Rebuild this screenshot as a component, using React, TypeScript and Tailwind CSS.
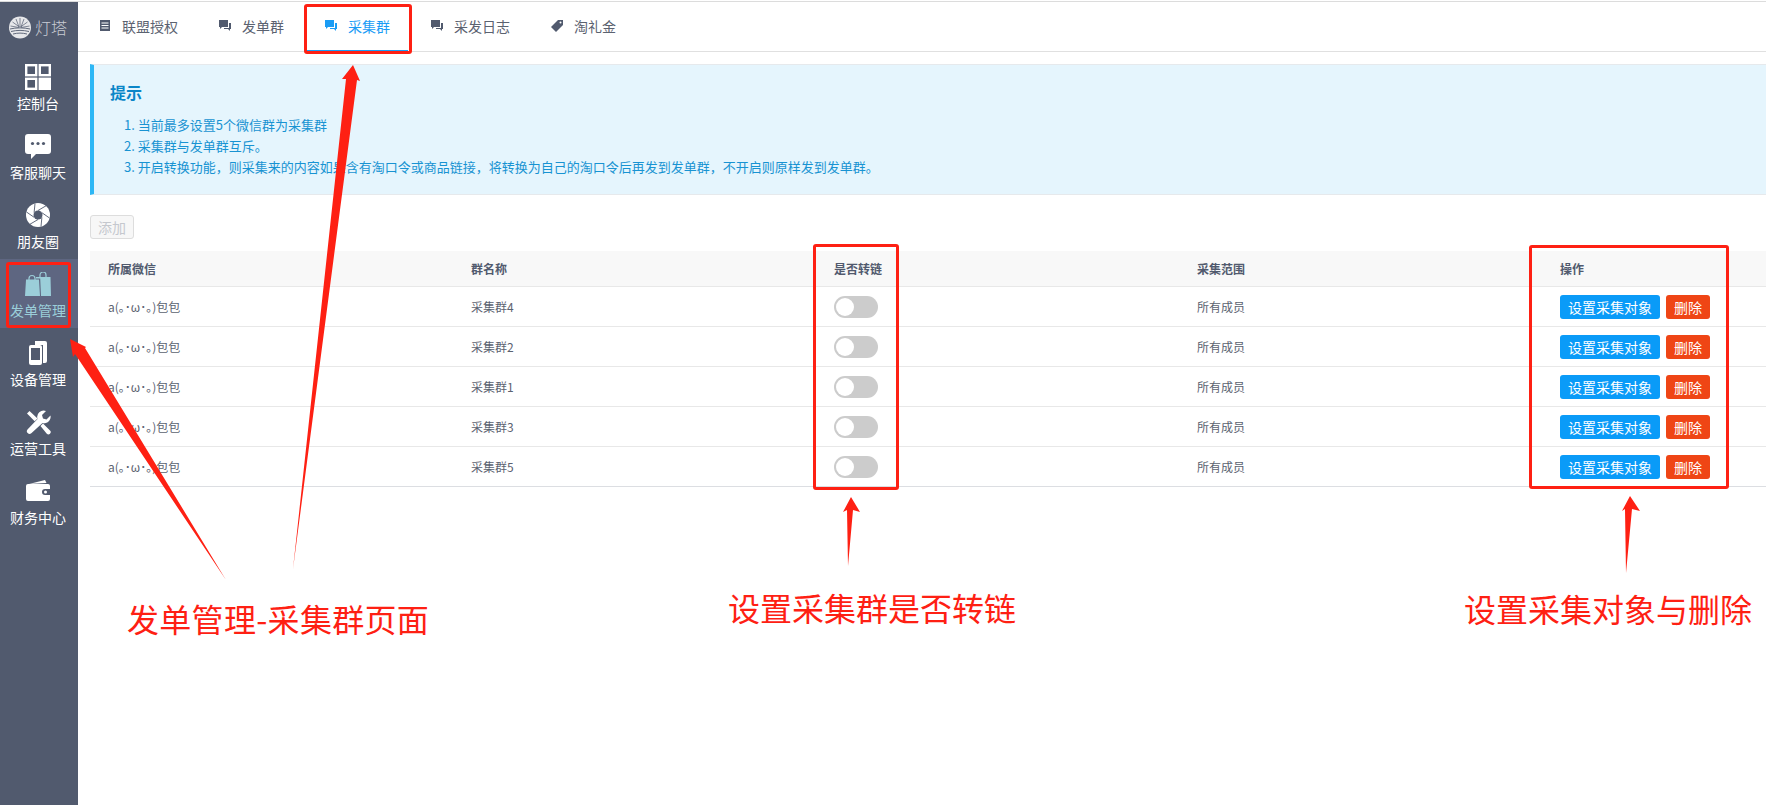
import { ReactNode } from "react";

const FONT = "font-['Noto_Sans_CJK_SC','Liberation_Sans',sans-serif]";

function Dashboard() {
    return (
        <svg width="26" height="26" viewBox="0 0 26 26" fill="none" stroke="#fff" strokeWidth="2.4">
            <rect x="1.2" y="1.2" width="10" height="10" />
            <rect x="14.8" y="1.2" width="10" height="10" />
            <rect x="1.2" y="14.8" width="10" height="10" />
            <rect x="14.8" y="14.8" width="10" height="10" fill="#fff" />
        </svg>
    );
}

function Bubble() {
    return (
        <svg width="26" height="25" viewBox="0 0 26 25">
            <path d="M3 0h20a3 3 0 0 1 3 3v14a3 3 0 0 1-3 3H11l-5 5v-5H3a3 3 0 0 1-3-3V3a3 3 0 0 1 3-3z" fill="#fff" />
            <circle cx="7.5" cy="9.5" r="1.6" fill="#515a6e" />
            <circle cx="13" cy="9.5" r="1.6" fill="#515a6e" />
            <circle cx="18.5" cy="9.5" r="1.6" fill="#515a6e" />
        </svg>
    );
}

function Aperture() {
    return (
        <svg width="24" height="24" viewBox="0 0 24 24">
            <circle cx="12" cy="12" r="12" fill="#fff" />
            <circle cx="12" cy="12" r="4.5" fill="#515a6e" />
            <g stroke="#515a6e" strokeWidth="0.9">
                <path d="M12 7.500L20.500 2.500" />
                <path d="M15.900 9.700L23.500 15" />
                <path d="M15.900 14.300L15 23.500" />
                <path d="M12 16.500L3.500 21.500" />
                <path d="M8.100 14.300L0.500 9" />
                <path d="M8.100 9.700L9 0.500" />
            </g>
        </svg>
    );
}

function Bags() {
    return (
        <svg width="26" height="24" viewBox="0 0 26 24" fill="#9bced9">
            <path d="M1 7.500h13l1 16.500H0z" />
            <path d="M11 5h14.500l.5 19H16l-.8-17.500H11z" />
            <path d="M4 9.500V6.500a3 3 0 0 1 6 0v3M15 6V3a3 3 0 0 1 6 0v3" fill="none" stroke="#9bced9" strokeWidth="1.2" />
        </svg>
    );
}

function Phones() {
    return (
        <svg width="18" height="24" viewBox="0 0 18 24">
            <path d="M6 0h10a2 2 0 0 1 2 2v18a2 2 0 0 1-2 2h-2V4H6z" fill="#fff" />
            <rect x="0" y="4" width="13" height="20" rx="2" fill="#fff" />
            <rect x="2" y="7" width="9" height="12" fill="#515a6e" />
        </svg>
    );
}

function Tools() {
    return (
        <svg width="25" height="25" viewBox="0 0 25 25" fill="#fff">
            <path d="M24.500 5.500l-4 4-3.500-1-1-3.500 4-4a6.500 6.500 0 0 0-8.500 8L1.500 19.500a2.700 2.700 0 0 0 3.800 3.800L16.500 13a6.500 6.500 0 0 0 8-7.500z" />
            <path d="M1 3.500L3.500 1l8 7.500-2.800 2.800z" />
            <path d="M14.500 16l2.500-2.500 7 7a2.200 2.200 0 0 1-3.200 3.200z" />
        </svg>
    );
}

function Wallet() {
    return (
        <svg width="24" height="22" viewBox="0 0 24 22" fill="#fff">
            <path d="M3 4L19 0l1.500 3z" />
            <path d="M2 4h20a2 2 0 0 1 2 2v3h-5a3 3 0 0 0 0 6h5v4a2 2 0 0 1-2 2H2a2 2 0 0 1-2-2V6a2 2 0 0 1 2-2z" />
            <circle cx="19.500" cy="12" r="1.500" />
        </svg>
    );
}

function ListIcon({ color }: { color: string }) {
    return (
        <svg width="12" height="12" viewBox="0 0 12 12">
            <rect width="10" height="11" x="1" fill={color} />
            <path d="M2.500 3h7M2.500 5.500h7M2.500 8h7" stroke="#fff" strokeWidth="1" />
        </svg>
    );
}

function ChatIcon({ color }: { color: string }) {
    return (
        <svg width="12" height="12" viewBox="0 0 12 12" fill={color}>
            <path d="M0 0h9v7H3L1 9V7H0z" />
            <path d="M10 3h2v6h-1v2L9 9H5V8h5z" />
        </svg>
    );
}

function TagIcon({ color }: { color: string }) {
    return (
        <svg width="12" height="12" viewBox="0 0 12 12" fill={color}>
            <path d="M7 0h5v5l-7 7-5-5z" />
            <circle cx="9.500" cy="2.500" r="1" fill="#fff" />
        </svg>
    );
}

const menu: { label: string; icon: ReactNode; active?: boolean }[] = [
    { label: "控制台", icon: <Dashboard /> },
    { label: "客服聊天", icon: <Bubble /> },
    { label: "朋友圈", icon: <Aperture /> },
    { label: "发单管理", icon: <Bags />, active: true },
    { label: "设备管理", icon: <Phones /> },
    { label: "运营工具", icon: <Tools /> },
    { label: "财务中心", icon: <Wallet /> },
];

const tabs = [
    { label: "联盟授权", Icon: ListIcon },
    { label: "发单群", Icon: ChatIcon },
    { label: "采集群", Icon: ChatIcon, active: true },
    { label: "采发日志", Icon: ChatIcon },
    { label: "淘礼金", Icon: TagIcon },
];

const groups = ["采集群4", "采集群2", "采集群1", "采集群3", "采集群5"];

const rowGrid = "grid grid-cols-[363px_363px_363px_363px_1fr] items-center pl-[18px]";

function Sidebar() {
    return (
        <aside className="w-[78px] shrink-0 bg-[#515a6e] flex flex-col">
            <div className="h-[50px] flex items-center pl-[9px] gap-[4px]">
                <svg width="22" height="23" viewBox="0 0 22 23">
                    <circle cx="11" cy="11.500" r="11" fill="#e6e7ea" />
                    <path d="M11 2v9M7 3l3 8M15 3l-3 8M3.500 6l7 5M18.500 6l-7 5M1.500 10l8.500 1.500M20.500 10l-8.500 1.500" stroke="#515a6e" strokeWidth="0.7" fill="none" />
                    <path d="M1 13c6-1.500 14-1.500 20 0M2 15.500c6-1.500 12-1.500 18 0M4 18c5-1.200 9-1.200 14 0" stroke="#515a6e" strokeWidth="0.9" fill="none" />
                </svg>
                <span className="text-[16px] leading-none font-light text-[#c9ccd4]">灯塔</span>
            </div>
            {menu.map((m) => (
                <div
                    key={m.label}
                    className={`h-[69px] flex flex-col items-center pt-[12px] pr-[2px] ${m.active ? "bg-[#5e6681] text-[#9bced9]" : "text-white"}`}
                >
                    <div className="h-[26px] flex items-center justify-center">{m.icon}</div>
                    <span className="mt-[3px] text-[14px] leading-[20px]">{m.label}</span>
                </div>
            ))}
        </aside>
    );
}

function TabBar() {
    return (
        <div className="h-[49px] border-b border-[#e0e0e0] flex gap-[5px] pl-[3px] box-content">
            {tabs.map((t) => (
                <div
                    key={t.label}
                    className={`h-[50px] px-[18px] flex items-center gap-[11px] text-[14px] border-b-2 ${t.active ? "border-[#1a9cf5] text-[#1a9cf5]" : "border-transparent text-[#5b6270]"}`}
                >
                    <t.Icon color={t.active ? "#1a9cf5" : "#515a6e"} />
                    <span>{t.label}</span>
                </div>
            ))}
        </div>
    );
}

function Notice() {
    return (
        <div className="mt-[12px] ml-[12px] h-[131px] border-y border-[#e6e9ec] border-l-4 border-l-[#2db7f5] bg-[#e5f5fd] pl-[16px] pt-[15px]">
            <h2 className="text-[16px] leading-[24px] font-semibold text-[#0a86c8]">提示</h2>
            <ol className="mt-[10px] pl-[14px] text-[13px] leading-[21px] text-[#1893d2]">
                <li>1. 当前最多设置5个微信群为采集群</li>
                <li>2. 采集群与发单群互斥。</li>
                <li>3. 开启转换功能，则采集来的内容如果含有淘口令或商品链接，将转换为自己的淘口令后再发到发单群，不开启则原样发到发单群。</li>
            </ol>
        </div>
    );
}

function GroupTable() {
    return (
        <div className="ml-[12px] mt-[12px] text-[12px] text-[#5b6270]">
            <div className={`${rowGrid} h-[36px] bg-[#f8f8f8] border-b border-[#e8e8e8] font-semibold text-[#515a6e]`}>
                <span>所属微信</span>
                <span>群名称</span>
                <span>是否转链</span>
                <span>采集范围</span>
                <span>操作</span>
            </div>
            {groups.map((g) => (
                <div key={g} className={`${rowGrid} h-[40px] border-b border-[#e8e8e8] last:border-[#dcdee2]`}>
                    <span>a(｡･ω･｡)包包</span>
                    <span>{g}</span>
                    <span>
                        <span className="block relative w-[44px] h-[22px] rounded-full bg-[#cccccc]">
                            <span className="absolute left-[2px] top-[2px] size-[18px] rounded-full bg-white" />
                        </span>
                    </span>
                    <span>所有成员</span>
                    <span className="flex gap-[6px]">
                        <button className="w-[100px] h-[24px] rounded-[3px] bg-[#0a9bf8] text-white text-[14px] leading-none">设置采集对象</button>
                        <button className="w-[44px] h-[24px] rounded-[3px] bg-[#ef4515] text-white text-[14px] leading-none">删除</button>
                    </span>
                </div>
            ))}
        </div>
    );
}

// annotations drawn on top of the screenshot
function Annotations() {
    const red = "#fe2013";
    return (
        <>
            <svg className="absolute inset-0 pointer-events-none" width="1766" height="805" viewBox="0 0 1766 805" fill={red}>
                <polygon points="353,65 360,81 357,80 293,569 346,79 342,79" />
                <polygon points="70,339 86,347 85,348 226,580 75,354 73,357" />
                <polygon points="851,497 860,512 853,510 848,566 847,510 843,512" />
                <polygon points="1630,496 1640,511 1632,509 1626,573 1625,509 1622,511" />
            </svg>
            <div className="absolute left-[6px] top-[262px] w-[65px] h-[66px] border-[3px] border-[#fe2013] rounded-[3px]" />
            <div className="absolute left-[304px] top-[4px] w-[108px] h-[50px] border-[3px] border-[#fe2013] rounded-[3px]" />
            <div className="absolute left-[813px] top-[244px] w-[86px] h-[246px] border-[3px] border-[#fe2013] rounded-[3px]" />
            <div className="absolute left-[1529px] top-[245px] w-[200px] h-[244px] border-[3px] border-[#fe2013] rounded-[3px]" />
            <span className="absolute left-[127px] top-[595px] text-[32px] leading-[46px] tracking-[0.3px] text-[#fe2013]">发单管理-采集群页面</span>
            <span className="absolute left-[728px] top-[584px] text-[32px] leading-[46px] text-[#fe2013]">设置采集群是否转链</span>
            <span className="absolute left-[1464px] top-[585px] text-[32px] leading-[46px] text-[#fe2013]">设置采集对象与删除</span>
        </>
    );
}

export default function App() {
    return (
        <div className={`relative w-[1766px] h-[805px] overflow-hidden bg-white ${FONT}`}>
            <div className="h-[2px] border-b border-[#dcdcdc]" />
            <div className="flex h-[803px]">
                <Sidebar />
                <main className="flex-1 min-w-0">
                    <TabBar />
                    <Notice />
                    <div className="ml-[12px] mt-[20px]">
                        <button className="block w-[44px] h-[24px] border border-[#dddddd] rounded-[3px] bg-[#f7f7f7] text-[14px] leading-none text-[#c5c8ce]">添加</button>
                    </div>
                    <GroupTable />
                </main>
            </div>
            <Annotations />
        </div>
    );
}
